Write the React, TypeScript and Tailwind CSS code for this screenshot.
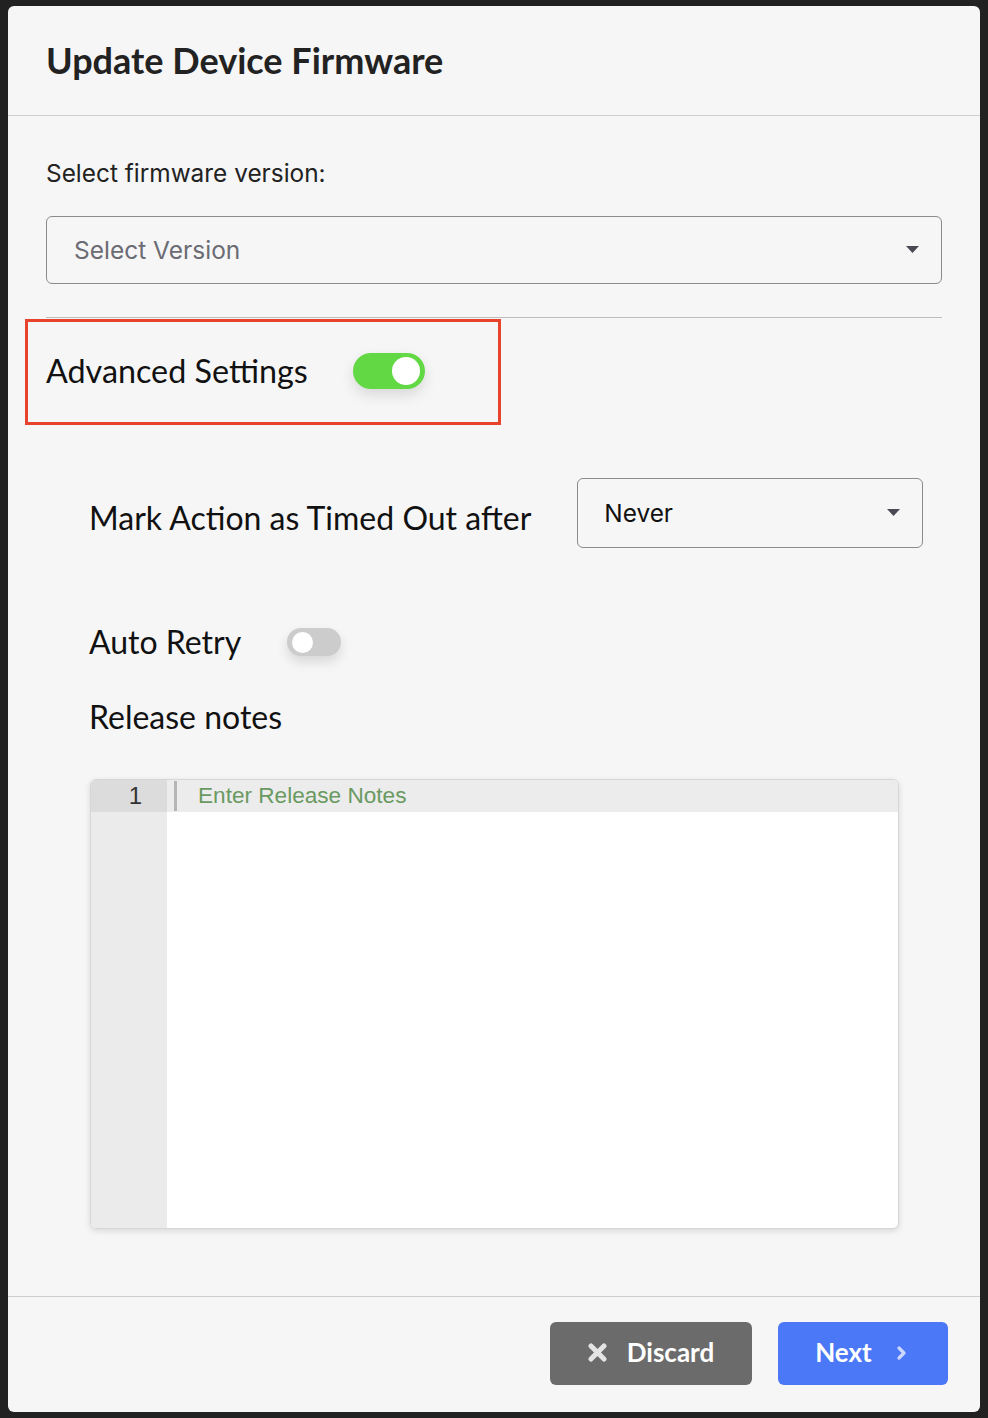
import React, { useState } from "react";

const lato = { fontFamily: "Lato, 'Noto Sans', sans-serif" };
const inter = { fontFamily: "Inter, 'Noto Sans', sans-serif" };
const arial = { fontFamily: "'Liberation Sans', Arial, sans-serif" };

function Caret() {
  return (
    <svg width="13" height="8" viewBox="0 0 13 8" className="shrink-0">
      <path d="M0 0 H13 L6.5 7 Z" fill="#4a4a55" />
    </svg>
  );
}

function Toggle({ on, big }: { on: boolean; big?: boolean }) {
  if (big) {
    return (
      <div
        className={`flex h-[36px] w-[72px] items-center rounded-full px-[5px] shadow-[0_6px_14px_rgba(0,0,0,0.12)] ${
          on ? "justify-end bg-[#63d845]" : "justify-start bg-[#cccccc]"
        }`}
      >
        <div className="h-[28px] w-[28px] rounded-full bg-white" />
      </div>
    );
  }
  return (
    <div
      className={`flex h-[28px] w-[54px] items-center rounded-full px-[5px] shadow-[0_6px_12px_rgba(0,0,0,0.12)] ${
        on ? "justify-end bg-[#63d845]" : "justify-start bg-[#cccccc]"
      }`}
    >
      <div className="h-[21px] w-[21px] rounded-full bg-white" />
    </div>
  );
}

export default function App() {
  const [advanced] = useState(true);
  const [retry] = useState(false);

  return (
    <div className="h-[1418px] w-full bg-[#212121] pl-[8px] pr-[8px] pt-[6px] pb-[6px]">
      <div className="flex h-full w-[972px] flex-col rounded-md bg-[#f6f6f6]">
        {/* header */}
        <div className="flex h-[110px] items-center border-b border-[#cfcfcf] px-[38px] pb-[2px]">
          <h1 className="text-[36px] font-bold text-[#222]" style={lato}>
            Update Device Firmware
          </h1>
        </div>

        {/* body */}
        <div className="flex flex-1 flex-col px-[38px] pt-[43px]">
          <label className="text-[24.4px] leading-[28px] text-[#222]" style={inter}>
            Select firmware version:
          </label>
          <div className="mt-[29px] flex h-[68px] items-center justify-between rounded-md border border-[#8a8a8f] pl-[27px] pr-[22px]">
            <span className="text-[24.5px] text-[#6b6b74]" style={inter}>
              Select Version
            </span>
            <Caret />
          </div>
          <div className="mt-[33px] border-t border-[#bdbdbd]" />

          <div className="-ml-[21px] mt-[1px] flex h-[106px] w-[476px] items-center border-[3px] border-[#e8432c] pl-[18px] pb-[2px]">
            <span className="text-[32.3px] text-[#111]" style={lato}>
              Advanced Settings
            </span>
            <div className="ml-[45px]">
              <Toggle on={advanced} big />
            </div>
          </div>

          <div className="ml-[43px] mt-[53px] flex items-center gap-[46px]">
            <span className="pt-[10px] text-[32px] leading-[40px] text-[#111]" style={lato}>
              Mark Action as Timed Out after
            </span>
            <div className="flex h-[70px] w-[346px] items-center justify-between rounded-md border border-[#8a8a8f] pl-[26px] pr-[22px]">
              <span className="text-[24.4px] text-[#111]" style={inter}>
                Never
              </span>
              <Caret />
            </div>
          </div>

          <div className="ml-[43px] mt-[74px] flex items-center gap-[46px]">
            <span className="text-[32px] leading-[40px] text-[#111]" style={lato}>
              Auto Retry
            </span>
            <Toggle on={retry} />
          </div>

          <div className="ml-[43px] mt-[35px] text-[32px] leading-[40px] text-[#111]" style={lato}>
            Release notes
          </div>

          {/* editor */}
          <div className="ml-[44px] mt-[42px] flex h-[450px] w-[809px] overflow-hidden rounded-md border border-[#d6d6d6] bg-white shadow-[0_2px_6px_rgba(0,0,0,0.12)]">
            <div className="w-[76px] shrink-0 bg-[#ebebeb]">
              <div
                className="flex h-[32px] items-center justify-end bg-[#dcdcdc] pr-[25px] text-[24px] text-[#333]"
                style={arial}
              >
                1
              </div>
            </div>
            <div className="flex-1">
              <div className="flex h-[32px] items-center bg-[#ececec]">
                <div className="ml-[7px] h-[30px] w-[3px] bg-[#b5b5b5]" />
                <span className="ml-[21px] text-[22.6px] text-[#6a9a62]" style={arial}>
                  Enter Release Notes
                </span>
              </div>
            </div>
          </div>
        </div>

        {/* footer */}
        <div className="flex h-[116px] items-start justify-end gap-[26px] border-t border-[#cfcfcf] pr-[32px] pt-[25px]">
          <button
            className="flex h-[63px] w-[202px] items-center justify-center gap-[20px] rounded-md bg-[#6b6b6b] pb-[2px] text-[26px] font-bold text-white"
            style={lato}
          >
            <svg width="19" height="19" viewBox="0 0 19 19">
              <path d="M3 3 L16 16 M16 3 L3 16" stroke="#e4e4e4" strokeWidth="5" strokeLinecap="round" />
            </svg>
            Discard
          </button>
          <button
            className="flex h-[63px] w-[170px] items-center justify-center gap-[24px] rounded-md bg-[#4a78f6] pb-[2px] pr-[4px] text-[26px] font-bold text-white"
            style={lato}
          >
            Next
            <svg width="11" height="16" viewBox="0 0 11 16">
              <path d="M3 3 L8 8 L3 13" fill="none" stroke="#cdd7ff" strokeWidth="3.2" strokeLinecap="round" strokeLinejoin="round" />
            </svg>
          </button>
        </div>
      </div>
    </div>
  );
}
